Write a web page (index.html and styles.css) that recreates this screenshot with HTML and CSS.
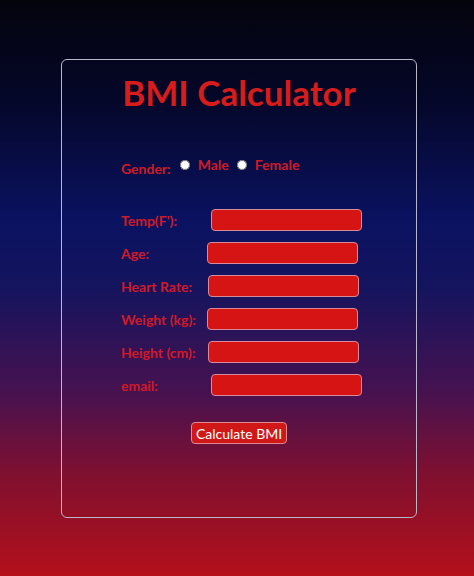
FILE: index.html
```html
<!doctype html>
<html lang="en">
  <head>
    <meta charset="UTF-8" />
    <meta name="viewport" content="width=device-width, initial-scale=1.0" />
    <title>BMI Calculator</title>
    <link rel="stylesheet" href="styles.css">
  </head>
  <body>
    <div class="card">
      <h1>BMI Calculator</h1>

      <div class="gender">
        <span class="gender-label">Gender:</span>
        <label class="radio"><input type="radio" name="gender" /> Male</label>
        <label class="radio"><input type="radio" name="gender" /> Female</label>
      </div>

      <form class="fields">
        <div class="row"><label class="w-temp">Temp(F'):</label><input type="text" class="field" /></div>
        <div class="row"><label class="w-age">Age:</label><input type="text" class="field" /></div>
        <div class="row"><label class="w-heart">Heart Rate:</label><input type="text" class="field" /></div>
        <div class="row"><label class="w-age">Weight (kg):</label><input type="text" class="field" /></div>
        <div class="row"><label class="w-heart">Height (cm):</label><input type="text" class="field" /></div>
        <div class="row"><label class="w-temp">email:</label><input type="text" class="field" /></div>
      </form>

      <div class="actions">
        <button type="button" class="calc-btn">Calculate BMI</button>
      </div>
    </div>
  </body>
</html>
```

FILE: styles.css
```css
html, body {
  margin: 0;
  height: 576px;
}

body {
  font-family: Lato, 'Open Sans', sans-serif;
  background: linear-gradient(to bottom, #04040c 0%, #05072a 18%, #0a1260 38%, #15145e 50%, #461250 68%, #7e1030 82%, #b3101a 100%);
  padding-top: 59px;
  box-sizing: border-box;
}

.card {
  width: 356px;
  height: 459px;
  margin-left: 61px;
  border: 1px solid #b8b8c8;
  border-radius: 6px;
  padding: 11px 0 0 59px;
  box-sizing: border-box;
}

h1 {
  margin: 0 0 0 -59px;
  color: #d81c1c;
  font-size: 35px;
  font-weight: 700;
  text-align: center;
  line-height: 42px;
}

.gender {
  display: flex;
  align-items: flex-start;
  margin-top: 43px;
  color: #d01a28;
  font-weight: 700;
  font-size: 14px;
}

.gender-label {
  padding-top: 4px;
  margin-right: 9px;
}

.radio {
  display: flex;
  align-items: center;
  margin-right: 8px;
}

.radio input {
  width: 10px;
  height: 10px;
  margin: 0 8px 0 0;
  accent-color: #ffffff;
}

.fields {
  margin-top: 32px;
  display: flex;
  flex-direction: column;
  gap: 11px;
}

.row {
  display: flex;
  align-items: center;
  height: 22px;
}

.row label {
  color: #d01a28;
  font-weight: 700;
  font-size: 14px;
}

.w-temp { width: 90px; }
.w-age { width: 86px; }
.w-heart { width: 87px; }

.field {
  width: 151px;
  height: 22px;
  box-sizing: border-box;
  background-color: #d61414;
  border: 1px solid #d88a9a;
  border-radius: 4px;
  padding: 0 6px;
}

.actions {
  margin-top: 26px;
  padding-left: 70px;
}

.calc-btn {
  font-family: Lato, 'Open Sans', sans-serif;
  font-size: 14px;
  color: #ffffff;
  background-color: #d01818;
  border: 1px solid #e08a90;
  border-radius: 4px;
  width: 96px;
  height: 22px;
  padding: 0;
  cursor: pointer;
}
```
